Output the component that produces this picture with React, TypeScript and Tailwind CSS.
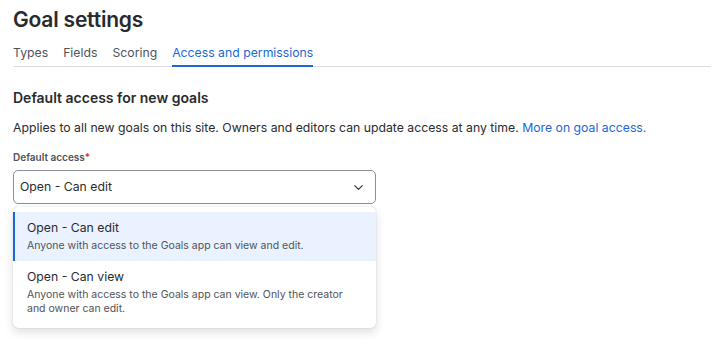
import { ChevronDown } from 'lucide-react'

const tabs = ['Types', 'Fields', 'Scoring', 'Access and permissions']

function Tabs({ active }: { active: string }) {
  return (
    <div className="flex gap-[15px] border-b border-[#dddee1] text-[12.25px] leading-[16px]">
      {tabs.map(t => (
        <div
          key={t}
          className={
            t === active
              ? '-mb-px border-b-2 border-[#1868db] pb-[4px] text-[#1868db]'
              : 'pb-[5px] text-[#505258]'
          }
        >
          {t}
        </div>
      ))}
    </div>
  )
}

function Option({
  title,
  description,
  selected,
}: {
  title: string
  description: string
  selected?: boolean
}) {
  return (
    <div
      className={
        selected
          ? 'border-l-2 border-[#1868db] bg-[#e9f2fe] pt-[7px] pb-[8px] pl-[12px] pr-[24px]'
          : 'border-l-2 border-transparent pt-[7px] pb-[8px] pl-[12px] pr-[24px]'
      }
    >
      <div className="text-[12.25px] leading-[18px] text-[#292a2e]">{title}</div>
      <div className="mt-[2px] text-[10.5px] leading-[14px] text-[#505258]">{description}</div>
    </div>
  )
}

export default function App() {
  return (
    <div className="min-h-screen bg-white px-[13px] pt-[6px] pr-[14px] text-[12.25px] text-[#292a2e] font-['Inter',sans-serif]">
      <h1 className="text-[21px] leading-[28px] font-semibold tracking-[-0.2px]">Goal settings</h1>

      <div className="mt-[11px]">
        <Tabs active="Access and permissions" />
      </div>

      <h2 className="mt-[21px] text-[14px] leading-[20px] font-semibold">Default access for new goals</h2>

      <p className="mt-[10px] leading-[20px]">
        Applies to all new goals on this site. Owners and editors can update access at any time.{' '}
        <span className="text-[#1868db]">More on goal access.</span>
      </p>

      <div className="mt-[11px] text-[10px] leading-[16px] font-semibold text-[#505258]">
        Default access<span className="text-[#c9372c]">*</span>
      </div>

      <div className="mt-[5px] w-[363px]">
        <div className="flex h-[34px] items-center justify-between rounded-[5px] border border-[#8c8f97] pl-[6px] pr-[9px]">
          <span>Open - Can edit</span>
          <ChevronDown size={15} strokeWidth={1.75} className="text-[#292a2e]" />
        </div>

        <div className="mt-[3px] overflow-hidden rounded-[5px] bg-white pt-[5px] pb-[4px] shadow-[0_4px_10px_rgba(30,31,33,0.15),0_0_1px_rgba(30,31,33,0.3)]">
          <Option
            selected
            title="Open - Can edit"
            description="Anyone with access to the Goals app can view and edit."
          />
          <Option
            title="Open - Can view"
            description="Anyone with access to the Goals app can view. Only the creator and owner can edit."
          />
        </div>
      </div>
    </div>
  )
}
